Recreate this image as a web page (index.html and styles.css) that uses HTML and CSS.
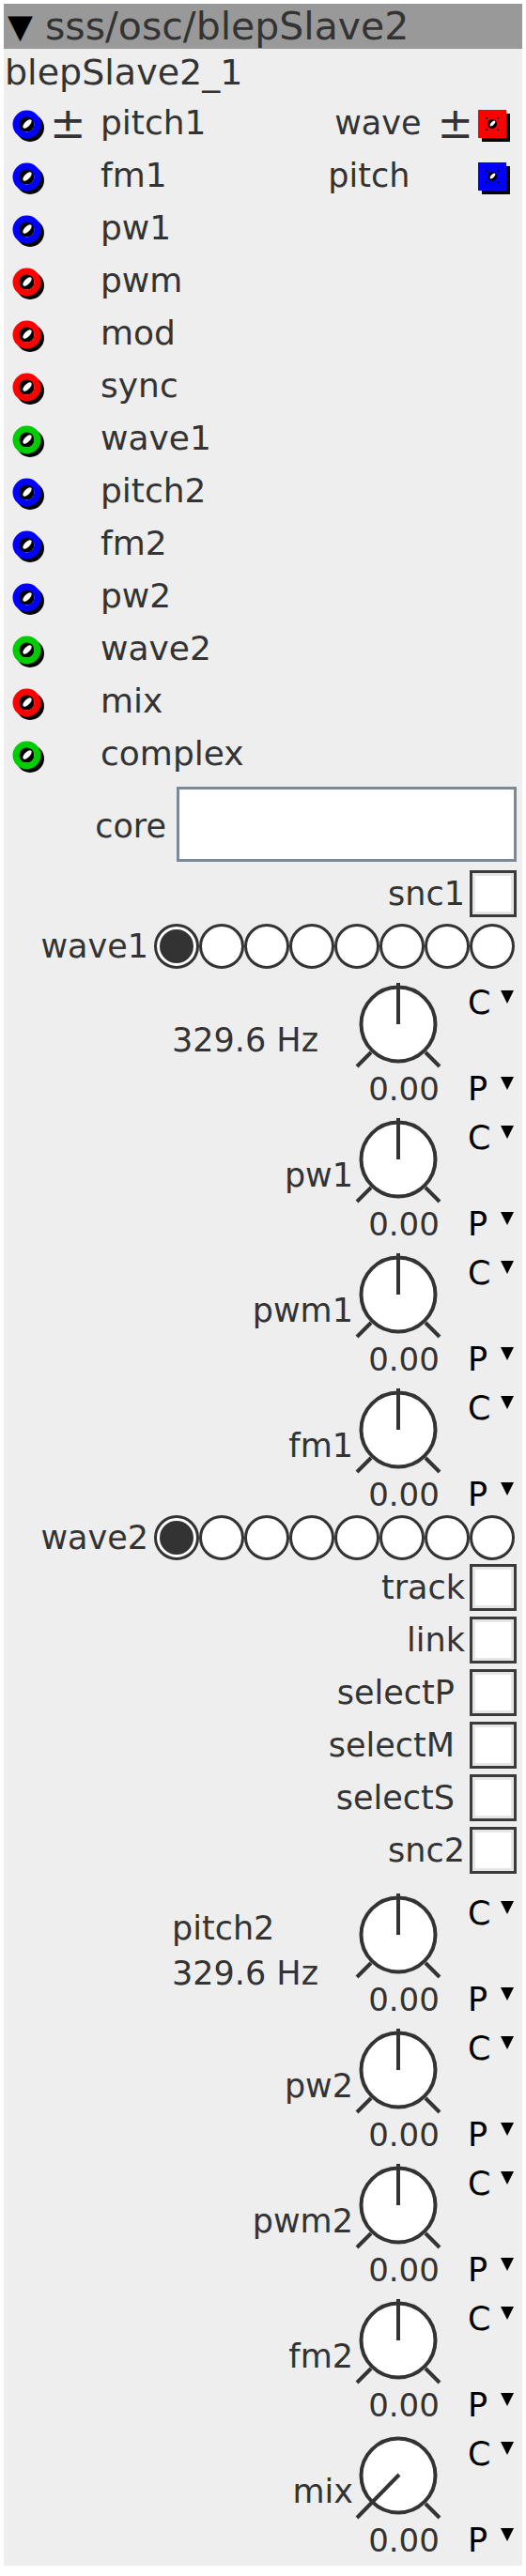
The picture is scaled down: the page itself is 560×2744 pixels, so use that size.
FILE: index.html
```html
<!DOCTYPE html>
<html>
<head>
    <title>sss/osc/blepSlave2</title>
    <link rel="stylesheet" href="styles.css">
</head>
<body>
    <svg class="defs" xmlns="http://www.w3.org/2000/svg">
        <symbol id="inlet" viewBox="0 0 36 36">
            <circle cx="19" cy="19" r="11.5" fill="none" stroke="#000" stroke-width="7"/>
            <circle cx="15.5" cy="15.5" r="8" fill="#000"/>
            <ellipse cx="16" cy="15" rx="6" ry="2.8" fill="#fff" transform="rotate(-45 16 15)"/>
            <circle cx="15.5" cy="15.5" r="11.5" fill="none" stroke="currentColor" stroke-width="7"/>
        </symbol>
        <symbol id="outlet" viewBox="0 0 36 36">
            <rect x="4" y="4" width="30" height="30" fill="#000"/>
            <rect x="0" y="0" width="30" height="30" fill="currentColor"/>
            <circle cx="15" cy="15" r="5" fill="#000"/>
            <ellipse cx="15.5" cy="14.5" rx="3.6" ry="1.6" fill="#fff" transform="rotate(-45 15.5 14.5)"/>
            <rect x="8" y="8" width="2" height="2" fill="#000"/>
            <rect x="20" y="8" width="2" height="2" fill="#000"/>
            <rect x="8" y="20" width="2" height="2" fill="#000"/>
            <rect x="20" y="20" width="2" height="2" fill="#000"/>
        </symbol>
        <symbol id="knob-mid" viewBox="0 0 96 96">
            <circle cx="48" cy="45" r="39.5" fill="#fff" stroke="#333" stroke-width="4"/>
            <line x1="48" y1="45" x2="48" y2="1" stroke="#333" stroke-width="4"/>
            <line x1="19" y1="75" x2="4" y2="90" stroke="#333" stroke-width="4"/>
            <line x1="77" y1="75" x2="92" y2="90" stroke="#333" stroke-width="4"/>
        </symbol>
        <symbol id="knob-min" viewBox="0 0 96 96">
            <circle cx="48" cy="45" r="39.5" fill="#fff" stroke="#333" stroke-width="4"/>
            <line x1="49" y1="44" x2="4" y2="90" stroke="#333" stroke-width="4"/>
            <line x1="77" y1="75" x2="92" y2="90" stroke="#333" stroke-width="4"/>
        </symbol>
    </svg>

    <div class="panel">
        <div class="header"><span class="header-arrow">▼</span> sss/osc/blepSlave2</div>

        <div class="content">
            <div class="title">blepSlave2_1</div>

            <div class="ports">
                <div class="port-row">
                    <svg class="inlet blue"><use href="#inlet"/></svg>
                    <span class="pm">±</span>
                    <span class="port-name">pitch1</span>
                    <div class="outlet">
                        <span class="out-name">wave</span>
                        <span class="pm-out">±</span>
                        <svg class="outlet-sq red"><use href="#outlet"/></svg>
                    </div>
                </div>
                <div class="port-row">
                    <svg class="inlet blue"><use href="#inlet"/></svg>
                    <span class="pm"></span>
                    <span class="port-name">fm1</span>
                    <div class="outlet">
                        <span class="out-name out-shift">pitch</span>
                        <span class="pm-out hidden">±</span>
                        <svg class="outlet-sq blue"><use href="#outlet"/></svg>
                    </div>
                </div>
                <div class="port-row">
                    <svg class="inlet blue"><use href="#inlet"/></svg>
                    <span class="pm"></span>
                    <span class="port-name">pw1</span>
                </div>
                <div class="port-row">
                    <svg class="inlet red"><use href="#inlet"/></svg>
                    <span class="pm"></span>
                    <span class="port-name">pwm</span>
                </div>
                <div class="port-row">
                    <svg class="inlet red"><use href="#inlet"/></svg>
                    <span class="pm"></span>
                    <span class="port-name">mod</span>
                </div>
                <div class="port-row">
                    <svg class="inlet red"><use href="#inlet"/></svg>
                    <span class="pm"></span>
                    <span class="port-name">sync</span>
                </div>
                <div class="port-row">
                    <svg class="inlet green"><use href="#inlet"/></svg>
                    <span class="pm"></span>
                    <span class="port-name">wave1</span>
                </div>
                <div class="port-row">
                    <svg class="inlet blue"><use href="#inlet"/></svg>
                    <span class="pm"></span>
                    <span class="port-name">pitch2</span>
                </div>
                <div class="port-row">
                    <svg class="inlet blue"><use href="#inlet"/></svg>
                    <span class="pm"></span>
                    <span class="port-name">fm2</span>
                </div>
                <div class="port-row">
                    <svg class="inlet blue"><use href="#inlet"/></svg>
                    <span class="pm"></span>
                    <span class="port-name">pw2</span>
                </div>
                <div class="port-row">
                    <svg class="inlet green"><use href="#inlet"/></svg>
                    <span class="pm"></span>
                    <span class="port-name">wave2</span>
                </div>
                <div class="port-row">
                    <svg class="inlet red"><use href="#inlet"/></svg>
                    <span class="pm"></span>
                    <span class="port-name">mix</span>
                </div>
                <div class="port-row">
                    <svg class="inlet green"><use href="#inlet"/></svg>
                    <span class="pm"></span>
                    <span class="port-name">complex</span>
                </div>
            </div>

            <div class="core-row">
                <span class="core-label">core</span>
                <input class="core-input" type="text">
            </div>

            <div class="check-row">
                <span class="check-label">snc1</span>
                <span class="check"></span>
            </div>

            <div class="radio-row">
                <span class="radio-label">wave1</span>
                <div class="radio-group">
                    <span class="radio selected"></span>
                    <span class="radio"></span>
                    <span class="radio"></span>
                    <span class="radio"></span>
                    <span class="radio"></span>
                    <span class="radio"></span>
                    <span class="radio"></span>
                    <span class="radio"></span>
                </div>
            </div>

            <div class="knobs">
                <div class="knob-row">
                    <div class="knob-label wide">329.6 Hz</div>
                    <div class="knob-col">
                        <svg class="knob"><use href="#knob-mid"/></svg>
                        <div class="knob-value">0.00</div>
                    </div>
                    <div class="cp-col">
                        <div class="cp"><span class="cp-letter">C</span><span class="arrow"></span></div>
                        <div class="cp"><span class="cp-letter">P</span><span class="arrow"></span></div>
                    </div>
                </div>
                <div class="knob-row">
                    <div class="knob-label">pw1</div>
                    <div class="knob-col">
                        <svg class="knob"><use href="#knob-mid"/></svg>
                        <div class="knob-value">0.00</div>
                    </div>
                    <div class="cp-col">
                        <div class="cp"><span class="cp-letter">C</span><span class="arrow"></span></div>
                        <div class="cp"><span class="cp-letter">P</span><span class="arrow"></span></div>
                    </div>
                </div>
                <div class="knob-row">
                    <div class="knob-label">pwm1</div>
                    <div class="knob-col">
                        <svg class="knob"><use href="#knob-mid"/></svg>
                        <div class="knob-value">0.00</div>
                    </div>
                    <div class="cp-col">
                        <div class="cp"><span class="cp-letter">C</span><span class="arrow"></span></div>
                        <div class="cp"><span class="cp-letter">P</span><span class="arrow"></span></div>
                    </div>
                </div>
                <div class="knob-row">
                    <div class="knob-label">fm1</div>
                    <div class="knob-col">
                        <svg class="knob"><use href="#knob-mid"/></svg>
                        <div class="knob-value">0.00</div>
                    </div>
                    <div class="cp-col">
                        <div class="cp"><span class="cp-letter">C</span><span class="arrow"></span></div>
                        <div class="cp"><span class="cp-letter">P</span><span class="arrow"></span></div>
                    </div>
                </div>
            </div>

            <div class="radio-row">
                <span class="radio-label">wave2</span>
                <div class="radio-group">
                    <span class="radio selected"></span>
                    <span class="radio"></span>
                    <span class="radio"></span>
                    <span class="radio"></span>
                    <span class="radio"></span>
                    <span class="radio"></span>
                    <span class="radio"></span>
                    <span class="radio"></span>
                </div>
            </div>

            <div class="checks">
                <div class="check-row">
                    <span class="check-label">track</span>
                    <span class="check"></span>
                </div>
                <div class="check-row">
                    <span class="check-label">link</span>
                    <span class="check"></span>
                </div>
                <div class="check-row">
                    <span class="check-label">selectP&nbsp;</span>
                    <span class="check"></span>
                </div>
                <div class="check-row">
                    <span class="check-label">selectM&nbsp;</span>
                    <span class="check"></span>
                </div>
                <div class="check-row">
                    <span class="check-label">selectS&nbsp;</span>
                    <span class="check"></span>
                </div>
                <div class="check-row">
                    <span class="check-label">snc2</span>
                    <span class="check"></span>
                </div>
            </div>

            <div class="knobs knobs-2">
                <div class="knob-row">
                    <div class="knob-label wide">pitch2<br>329.6 Hz</div>
                    <div class="knob-col">
                        <svg class="knob"><use href="#knob-mid"/></svg>
                        <div class="knob-value">0.00</div>
                    </div>
                    <div class="cp-col">
                        <div class="cp"><span class="cp-letter">C</span><span class="arrow"></span></div>
                        <div class="cp"><span class="cp-letter">P</span><span class="arrow"></span></div>
                    </div>
                </div>
                <div class="knob-row">
                    <div class="knob-label">pw2</div>
                    <div class="knob-col">
                        <svg class="knob"><use href="#knob-mid"/></svg>
                        <div class="knob-value">0.00</div>
                    </div>
                    <div class="cp-col">
                        <div class="cp"><span class="cp-letter">C</span><span class="arrow"></span></div>
                        <div class="cp"><span class="cp-letter">P</span><span class="arrow"></span></div>
                    </div>
                </div>
                <div class="knob-row">
                    <div class="knob-label">pwm2</div>
                    <div class="knob-col">
                        <svg class="knob"><use href="#knob-mid"/></svg>
                        <div class="knob-value">0.00</div>
                    </div>
                    <div class="cp-col">
                        <div class="cp"><span class="cp-letter">C</span><span class="arrow"></span></div>
                        <div class="cp"><span class="cp-letter">P</span><span class="arrow"></span></div>
                    </div>
                </div>
                <div class="knob-row">
                    <div class="knob-label">fm2</div>
                    <div class="knob-col">
                        <svg class="knob"><use href="#knob-mid"/></svg>
                        <div class="knob-value">0.00</div>
                    </div>
                    <div class="cp-col">
                        <div class="cp"><span class="cp-letter">C</span><span class="arrow"></span></div>
                        <div class="cp"><span class="cp-letter">P</span><span class="arrow"></span></div>
                    </div>
                </div>
                <div class="knob-row">
                    <div class="knob-label">mix</div>
                    <div class="knob-col">
                        <svg class="knob"><use href="#knob-min"/></svg>
                        <div class="knob-value">0.00</div>
                    </div>
                    <div class="cp-col">
                        <div class="cp"><span class="cp-letter">C</span><span class="arrow"></span></div>
                        <div class="cp"><span class="cp-letter">P</span><span class="arrow"></span></div>
                    </div>
                </div>
            </div>
        </div>
    </div>
</body>
</html>
```

FILE: styles.css
```css
body {
    margin: 4px;
    font-family: "DejaVu Sans", Verdana, sans-serif;
    font-size: 35px;
    color: #333;
    background: #fff;
}

.defs {
    display: none;
}

.panel {
    background: #eeeeee;
}

.header {
    height: 48px;
    line-height: 48px;
    padding-left: 4px;
    font-size: 41px;
    background: #999999;
    white-space: nowrap;
    overflow: hidden;
}

.header-arrow {
    font-size: 35px;
    color: #000;
    vertical-align: top;
}

.content {
    padding: 0 6px 9px 0;
}

.title {
    height: 51px;
    line-height: 51px;
    padding-left: 1px;
    font-size: 38px;
}

/* inlets / outlets */
.port-row {
    display: flex;
    align-items: center;
    height: 56px;
    line-height: 56px;
}

.inlet {
    width: 36px;
    height: 36px;
    margin: 8px 0 0 9px;
    flex-shrink: 0;
}

.pm {
    width: 52px;
    padding-left: 4px;
    box-sizing: border-box;
    flex-shrink: 0;
    font-size: 46px;
}

.port-name {
    margin-left: 6px;
    font-size: 36px;
}

.blue { color: #0000ff; }
.red { color: #ff0000; }
.green { color: #00cc00; }

.outlet {
    display: flex;
    align-items: center;
    margin-left: auto;
}

.out-shift {
    margin-right: 12px;
}

.pm-out {
    margin: 0 5px 0 17px;
    font-size: 46px;
}

.pm-out.hidden {
    visibility: hidden;
}

.outlet-sq {
    width: 36px;
    height: 36px;
    margin: 8px 5px 0 0;
}

/* core text field */
.core-row {
    display: flex;
    justify-content: flex-end;
    align-items: center;
    height: 93px;
}

.core-label {
    margin-top: 4px;
}

.core-input {
    width: 362px;
    height: 80px;
    margin-left: 11px;
    box-sizing: border-box;
    border: 3px solid #7b8895;
    background: #fff;
    padding: 0;
}

/* toggles */
.check-row {
    display: flex;
    justify-content: flex-end;
    align-items: center;
    height: 56px;
}

.check-label {
    white-space: pre;
    margin-right: 5px;
}

.check {
    width: 50px;
    height: 50px;
    box-sizing: border-box;
    border: 3px solid #3a3a3a;
    background: #fff;
    box-shadow: inset 0 0 0 3px #e6e6e6;
}

/* radio groups */
.radio-row {
    display: flex;
    justify-content: flex-end;
    align-items: center;
    height: 50px;
    margin-top: 3px;
    padding-right: 2px;
}

.radio-label {
    margin-right: 6px;
}

.radio-group {
    display: flex;
}

.radio {
    position: relative;
    width: 48px;
    height: 48px;
    box-sizing: border-box;
    border: 3.5px solid #333;
    border-radius: 50%;
    background: #fff;
}

.radio.selected::after {
    content: "";
    position: absolute;
    left: 2.5px;
    top: 2.5px;
    width: 36px;
    height: 36px;
    border-radius: 50%;
    background: #333;
}

/* knobs */
.knobs {
    margin-top: 1px;
}

.knobs-2 {
    margin-top: 5px;
}

.knob-row {
    display: flex;
    justify-content: flex-end;
    height: 144px;
}

.knob-label {
    align-self: center;
    margin-top: 4px;
    line-height: 48px;
    white-space: nowrap;
}

.knob-label.wide {
    margin-right: 37px;
}

.knob-col {
    width: 108px;
    margin-right: 14px;
    display: flex;
    flex-direction: column;
}

.knob {
    width: 96px;
    height: 96px;
    margin-top: 12px;
}

.knob-value {
    font-size: 34px;
    line-height: 36px;
    text-align: center;
}

.cp-col {
    width: 52px;
    display: flex;
    flex-direction: column;
    justify-content: space-between;
    padding-top: 16px;
}

.cp {
    font-size: 35px;
    line-height: 36px;
    color: #000;
    white-space: nowrap;
}

.cp-letter {
    display: inline-block;
    width: 35px;
}

.arrow {
    display: inline-block;
    vertical-align: top;
    margin-top: 5px;
    width: 0;
    height: 0;
    border-left: 7px solid transparent;
    border-right: 7px solid transparent;
    border-top: 14px solid #000;
}
```
